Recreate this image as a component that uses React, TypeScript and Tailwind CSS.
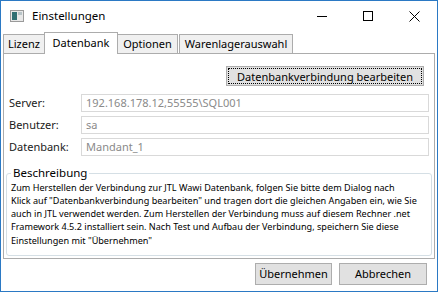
import React from "react";

const font = { fontFamily: '"Segoe UI", "Noto Sans", "Open Sans", sans-serif' };

function AppIcon() {
  return (
    <svg width="14" height="12" viewBox="0 0 14 12">
      <rect x="0.5" y="0.5" width="13" height="11" fill="#e8e8e8" stroke="#9a9a9a" />
      <rect x="2" y="2" width="5" height="8" fill="#2f6f73" />
      <rect x="8" y="2" width="4" height="3" fill="#b8c4c8" />
    </svg>
  );
}

const lines = [
  "Zum Herstellen der Verbindung zur JTL Wawi Datenbank, folgen Sie bitte dem Dialog nach",
  'Klick auf "Datenbankverbindung bearbeiten" und tragen dort die gleichen Angaben ein, wie Sie',
  "auch in JTL verwendet werden. Zum Herstellen der Verbindung muss auf diesem Rechner .net",
  "Framework 4.5.2 installiert sein. Nach Test und Aufbau der Verbindung, speichern Sie diese",
  'Einstellungen mit "Übernehmen"',
];

export default function App() {
  return (
    <div className="w-[440px] h-[293px] bg-white" style={font}>
      <div className="w-[438px] h-[292px] border border-[#2b79c4] bg-white flex flex-col text-[11px] text-black">
        {/* title bar */}
        <div className="h-[30px] flex items-center shrink-0">
          <div className="ml-[9px] mr-[8px] flex items-center">
            <AppIcon />
          </div>
          <span className="text-[11.5px] text-black">Einstellungen</span>
          <div className="ml-auto flex items-center h-full">
            <div className="w-[46px] h-full flex items-center justify-center">
              <div className="w-[10px] h-px bg-black" />
            </div>
            <div className="w-[46px] h-full flex items-center justify-center">
              <div className="w-[10px] h-[10px] border border-black" />
            </div>
            <div className="w-[46px] h-full flex items-center justify-center">
              <svg width="11" height="11" viewBox="0 0 11 11">
                <path d="M0.5 0.5 L10.5 10.5 M10.5 0.5 L0.5 10.5" stroke="#000" strokeWidth="1" />
              </svg>
            </div>
          </div>
        </div>

        {/* tabs */}
        <div className="flex items-end h-[22px] pl-[2px] shrink-0 relative z-10">
          <div className="w-[42px] h-[19px] flex items-center justify-center bg-[#f0f0f0] border border-[#acacac] border-b-0">Lizenz</div>
          <div className="w-[74px] h-[22px] flex items-center justify-center bg-white border border-[#acacac] border-b-0 -mb-px -ml-px">Datenbank</div>
          <div className="w-[61px] h-[19px] flex items-center justify-center bg-[#f0f0f0] border border-[#acacac] border-b-0 -ml-px">Optionen</div>
          <div className="w-[114px] h-[19px] flex items-center justify-center bg-[#f0f0f0] border border-[#acacac] border-b-0 ml-px">Warenlagerauswahl</div>
        </div>

        {/* tab panel */}
        <div className="mx-[2px] h-[206px] border border-[#acacac] flex flex-col shrink-0">
          <div className="flex justify-end pr-[10px] pt-[12px]">
            <button className="w-[198px] h-[20px] bg-[#e1e1e1] border border-[#adadad] outline-1 outline-dotted outline-black -outline-offset-[3px] text-[11px] leading-none flex items-center justify-center">
              Datenbankverbindung bearbeiten
            </button>
          </div>

          <div className="mt-[8px] flex flex-col gap-[4px] pr-[5px]">
            {[
              ["Server:", "192.168.178.12,55555\\SQL001"],
              ["Benutzer:", "sa"],
              ["Datenbank:", "Mandant_1"],
            ].map(([l, v]) => (
              <div key={l} className="flex items-center h-[18px]">
                <div className="w-[77px] pl-[5px] text-[#1a1a1a]">{l}</div>
                <div className="flex-1 h-[18px] border border-[#d9d9d9] flex items-center pl-[4px] text-[#8a8a8a]">{v}</div>
              </div>
            ))}
          </div>

          <div className="mt-[17px] mx-[2px] relative border border-[#d5dfe5] rounded-[3px] h-[83px]">
            <div className="absolute -top-[9px] left-[4px] bg-white px-[2px] text-[11.5px] leading-[16px] text-black">Beschreibung</div>
            <div className="pt-[7px] pl-[4px] pr-[4px] text-[9.1px] leading-[13px] text-black">
              {lines.map((t, i) => (
                <div key={i} className={"whitespace-nowrap" + (i === 4 ? " mt-[1px]" : "")}>{t}</div>
              ))}
            </div>
          </div>
        </div>

        {/* buttons */}
        <div className="flex justify-end gap-[7px] pr-[10px] pt-[4px]">
          <button className="w-[77px] h-[22px] bg-[#e1e1e1] border border-[#adadad] text-[11px] flex items-center justify-center">Übernehmen</button>
          <button className="w-[88px] h-[22px] bg-[#e1e1e1] border border-[#adadad] text-[11px] flex items-center justify-center">Abbrechen</button>
        </div>
      </div>
    </div>
  );
}
